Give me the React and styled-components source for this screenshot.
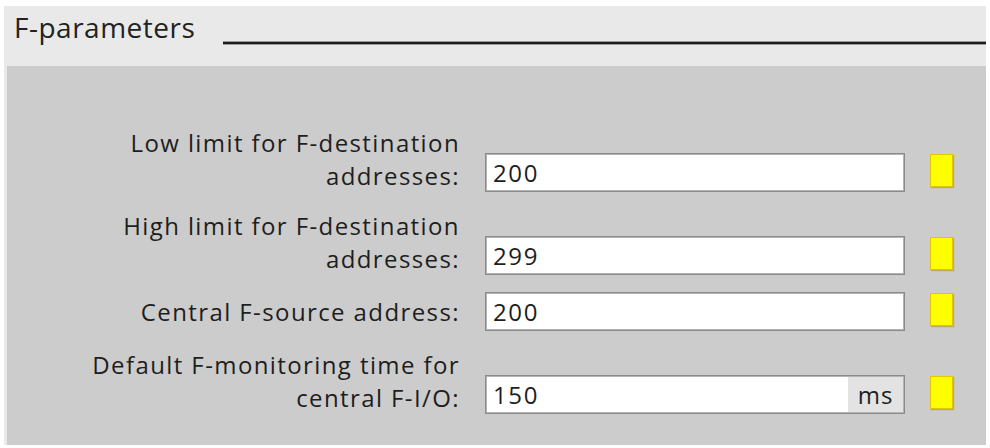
import React from 'react'
import styled, { createGlobalStyle } from 'styled-components'

const Global = createGlobalStyle`
    html, body {
        margin: 0;
        padding: 0;
        background: #ffffff;
    }
    body {
        font-family: "Open Sans", "Noto Sans", sans-serif;
        color: #1e1e1e;
    }
`

const Frame = styled.div`
    width: 990px;
    height: 448px;
    padding: 6px 4px 3px 4px;
    box-sizing: border-box;
    display: flex;
    flex-direction: column;
`

const Section = styled.div`
    flex: 1;
    display: flex;
    flex-direction: column;
    background: #e9e9e9;
`

const Header = styled.div`
    height: 60px;
    display: flex;
    align-items: flex-end;
    padding: 0 0 22px 10px;
    box-sizing: border-box;
`

const Title = styled.div`
    font-size: 28px;
    line-height: 32px;
    letter-spacing: 0.5px;
    color: #222;
    margin-bottom: 1px;
`

const Rule = styled.div`
    flex: 1;
    height: 2px;
    margin-left: 28px;
    background: #1c1c1c;
    box-shadow: 0 -1px 0 #9a9a9a, 0 1px 0 #9a9a9a;
`

const Panel = styled.div`
    flex: 1;
    margin-left: 3px;
    background: #cccccc;
    padding: 60px 0 28px 0;
    display: flex;
    flex-direction: column;
    gap: 17px;
`

const Row = styled.div`
    display: flex;
    align-items: flex-end;
`

const Label = styled.div`
    width: 453px;
    text-align: right;
    font-size: 24px;
    line-height: 33px;
    letter-spacing: 1.4px;
    color: #1e1e1e;
    padding-bottom: ${p => (p.$single ? '3px' : '0')};
`

const Field = styled.div`
    margin-left: 25px;
    width: 420px;
    height: 39px;
    box-sizing: border-box;
    display: flex;
    background: #ffffff;
    border: 1px solid #8a8a8a;
    box-shadow: inset 0 0 0 1px #b4b4b4;
`

const Value = styled.div`
    flex: 1;
    padding-left: 7px;
    font-size: 24px;
    line-height: 37px;
    letter-spacing: 1.6px;
    color: #1e1e1e;
`

const Unit = styled.div`
    width: 55px;
    margin: 1px 1px 1px 0;
    background: #e3e3e3;
    font-size: 24px;
    line-height: 35px;
    letter-spacing: 1px;
    text-align: center;
    color: #1e1e1e;
`

const Marker = styled.div`
    margin-left: 25px;
    align-self: flex-end;
    margin-bottom: 5px;
    width: 23px;
    height: 33px;
    box-sizing: border-box;
    background: #ffff00;
    border: 1px solid #e2c400;
    box-shadow: 1px 1px 1px rgba(160, 130, 0, 0.45);
`

const rows = [
    { label: ['Low limit for F-destination', 'addresses:'], value: '200' },
    { label: ['High limit for F-destination', 'addresses:'], value: '299' },
    { label: ['Central F-source address:'], value: '200' },
    { label: ['Default F-monitoring time for', 'central F-I/O:'], value: '150', unit: 'ms' },
]

export default function App() {
    return (
        <>
            <Global />
            <Frame>
                <Section>
                    <Header>
                        <Title>F-parameters</Title>
                        <Rule />
                    </Header>
                    <Panel>
                        {rows.map((r, i) => (
                            <Row key={i}>
                                <Label $single={r.label.length === 1}>
                                    {r.label.map((l, j) => (
                                        <div key={j}>{l}</div>
                                    ))}
                                </Label>
                                <Field>
                                    <Value>{r.value}</Value>
                                    {r.unit && <Unit>{r.unit}</Unit>}
                                </Field>
                                <Marker />
                            </Row>
                        ))}
                    </Panel>
                </Section>
            </Frame>
        </>
    )
}
